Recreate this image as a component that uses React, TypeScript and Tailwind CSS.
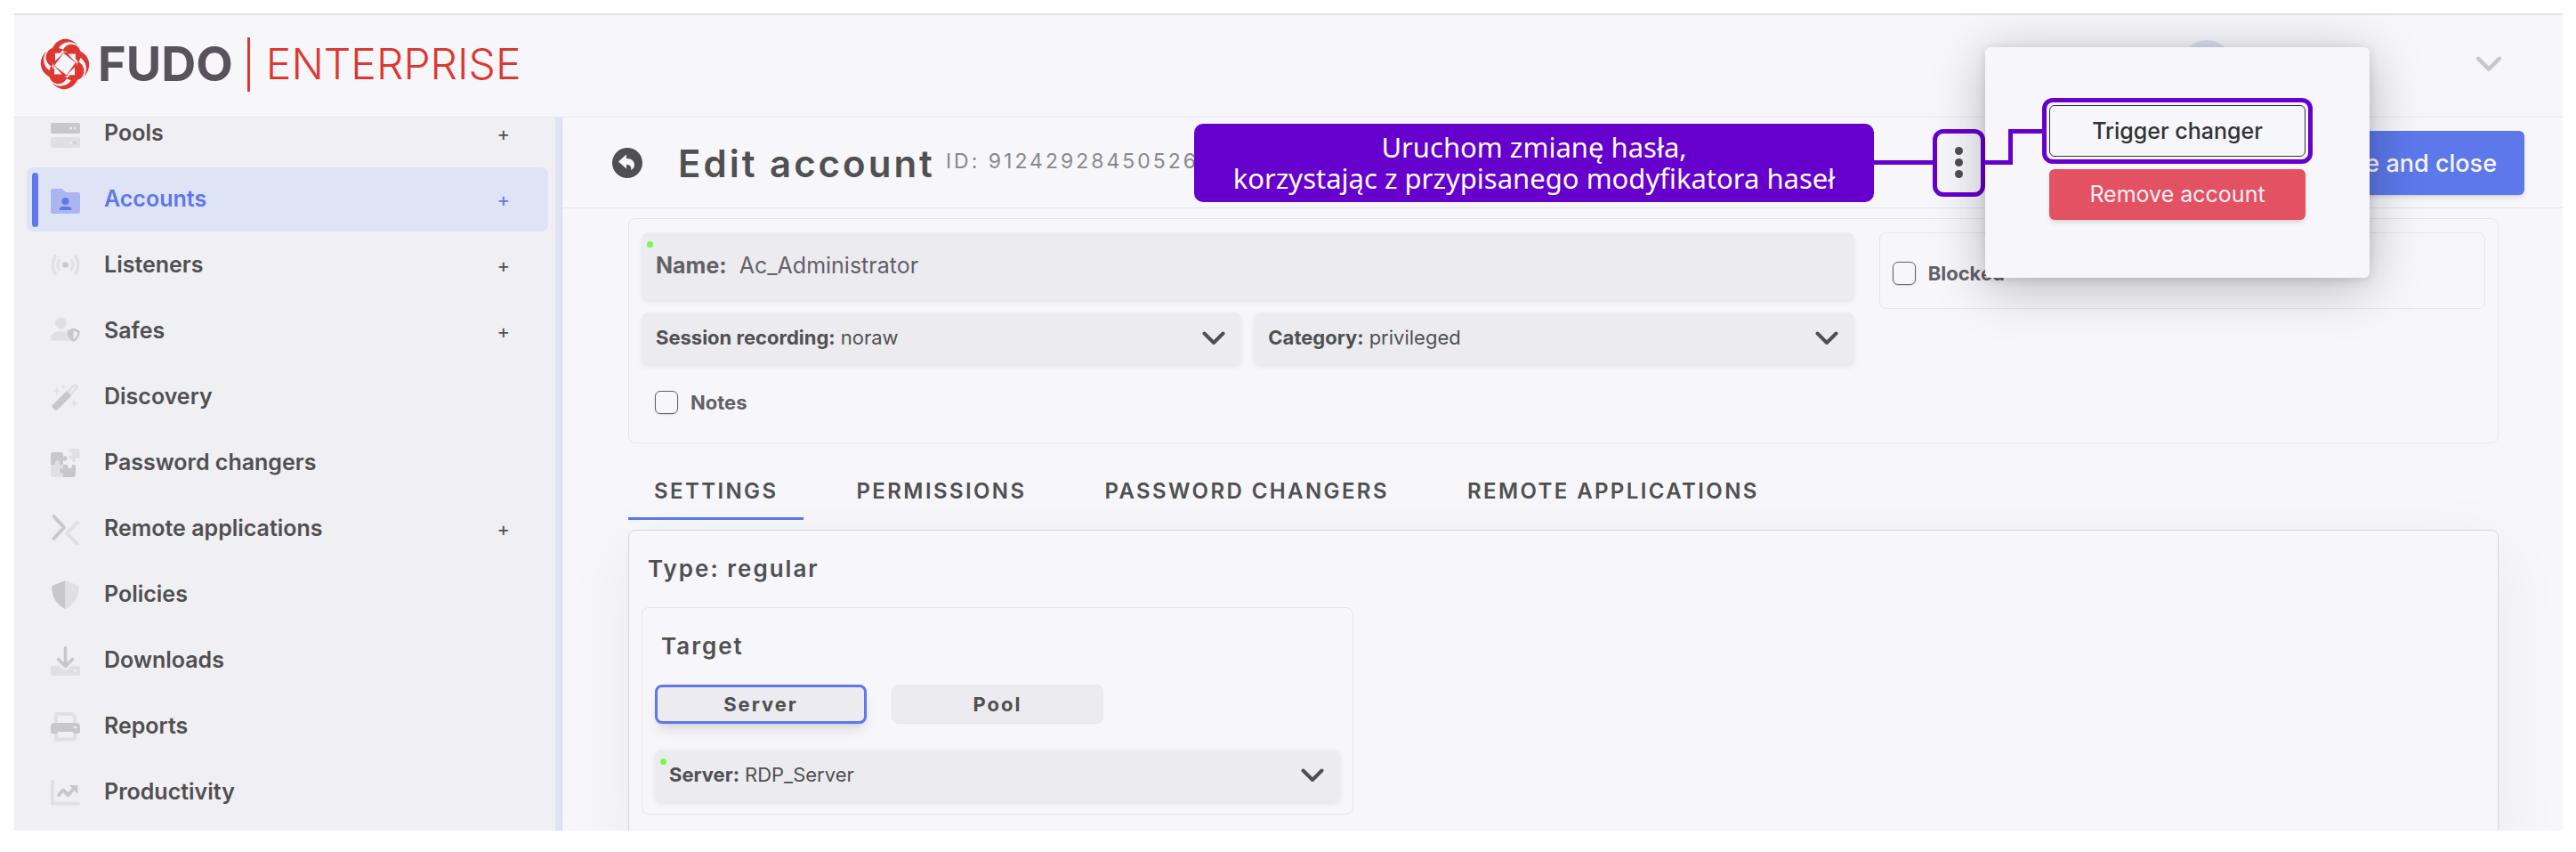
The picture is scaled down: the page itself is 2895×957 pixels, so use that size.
import React, { useState } from 'react';

const LIGHT = '#e0e0e2';
const DARK = '#c8c8ca';

const IconBox: React.FC<{ children: React.ReactNode }> = ({ children }) => (
    <svg viewBox="0 0 34 36" className="w-[34px] h-9 shrink-0" fill="none" aria-hidden="true">
        {children}
    </svg>
);

const PoolsIcon = () => (
    <IconBox>
        <rect x="0" y="6" width="33" height="12" rx="2" fill={DARK} />
        <rect x="0" y="22" width="33" height="12" rx="2" fill={LIGHT} />
        <circle cx="22.500" cy="12" r="1.500" fill="#f0eff4" />
        <circle cx="27" cy="12" r="1.500" fill="#e4e4e6" />
        <circle cx="22.500" cy="28" r="1.500" fill="#f0eff4" />
        <circle cx="27" cy="28" r="1.500" fill={DARK} />
    </IconBox>
);

const AccountsIcon = () => (
    <IconBox>
        <path d="M2 6h11l4 4h14a2 2 0 0 1 2 2v20a2 2 0 0 1-2 2H2a2 2 0 0 1-2-2V8a2 2 0 0 1 2-2z" fill="#abb6f0" />
        <circle cx="16.500" cy="20" r="4" fill="#5c78eb" />
        <path d="M9.500 30c0-3 2-4 4-4h6c2 0 4 1 4 4z" fill="#5c78eb" />
    </IconBox>
);

const ListenersIcon = () => (
    <IconBox>
        <circle cx="16.500" cy="17.500" r="3.300" fill={DARK} />
        <path d="M5 8a18 18 0 0 0 0 19M28 8a18 18 0 0 1 0 19" stroke={LIGHT} strokeWidth="3.600" strokeLinecap="round" />
        <path d="M9.500 12.500a9 9 0 0 0 0 10M23.500 12.500a9 9 0 0 1 0 10" stroke={LIGHT} strokeWidth="3.200" strokeLinecap="round" />
    </IconBox>
);

const SafesIcon = () => (
    <IconBox>
        <circle cx="11.500" cy="9" r="6.500" fill={LIGHT} />
        <path d="M0 28.500C0 21 4 18.500 8 18.500h7c1.500 0 1.800 0 2.500.3 0 4 1.500 7.500 4.500 9.700z" fill={LIGHT} />
        <path d="M25.500 14.500l7 2.700c.6 6-2 10.500-7 12.800-5-2.300-7.600-6.800-7-12.800z" fill={DARK} />
        <path d="M25.500 17.500l4.500 1.700c0 3.700-1.500 6.300-4.500 8z" fill="#f0eff4" />
    </IconBox>
);

const DiscoveryIcon = () => (
    <IconBox>
        <path d="M18.500 10.500L25 4a3.600 3.600 0 0 1 5 5l-6.500 6.500z" fill={LIGHT} />
        <path d="M21.500 11.500L27 6.500l1 1-5 5.500z" fill="#f0eff4" />
        <path d="M18 11l5.500 5.500L8 32a3 3 0 0 1-4 0l-1.500-1.500a3 3 0 0 1 0-4z" fill={DARK} />
        <path d="M6.500 6.500l1.300 3.200L11 11l-3.200 1.300-1.300 3.200-1.300-3.200L2 11l3.200-1.300z" fill={LIGHT} />
        <path d="M14.500 3l.9 2.100 2.100.9-2.100.9-.9 2.100-.9-2.100-2.100-.9 2.100-.9z" fill={LIGHT} />
        <path d="M26.500 20.500l1.300 3.200L31 25l-3.200 1.300-1.300 3.200-1.300-3.200L22 25l3.200-1.300z" fill={LIGHT} />
    </IconBox>
);

const PuzzleIcon = () => (
    <IconBox>
        <path d="M3 6h9a2 2 0 0 1 2 2v3c2-1.500 4.500-.3 4.500 2S16 16.500 14 15v5H9.500c1-2.500 0-4.500-2-4.500S4.500 17.500 5.500 20H0V9a3 3 0 0 1 3-3z" fill={DARK} />
        <path d="M0 20h5.500c-1-2.500 0-4.500 2-4.500s3 2 2 4.500H14v5c-2-1.500-4.500-.3-4.500 2S12 30.500 14 29v5H3a3 3 0 0 1-3-3z" fill={LIGHT} />
        <path d="M14 20h5.500c-1 2.500 0 4 2 4s3-1.500 2-4H26a2 2 0 0 1 2 2v9a3 3 0 0 1-3 3H14v-5c-2 1.500-4 .3-4-2s2-3.500 4-2z" fill={DARK} />
        <path d="M22 2h7a3.500 3.500 0 0 1 3.500 3.500V13h-5c1 2.500 0 4-1.500 4s-2.500-1.500-1.500-4H22a2 2 0 0 1-2-2v-1c2 .8 4-.3 4-2.300S22 4.700 20 5.500V4a2 2 0 0 1 2-2z" fill={LIGHT} />
    </IconBox>
);

const RemoteIcon = () => (
    <IconBox>
        <path d="M3.500 4L15 16.500 3.500 29" stroke={DARK} strokeWidth="4" strokeLinecap="round" strokeLinejoin="round" />
        <path d="M30 11L18 23l12 12" stroke={LIGHT} strokeWidth="4" strokeLinecap="round" strokeLinejoin="round" />
    </IconBox>
);

const PoliciesIcon = () => (
    <IconBox>
        <path d="M16.500 2v32C6.500 29.500 1 20 1.300 9.500c0-1 .5-1.600 1.400-2z" fill={DARK} />
        <path d="M16.500 2l13.800 5.500c.9.400 1.400 1 1.400 2C32 20 26.500 29.500 16.500 34z" fill={LIGHT} />
    </IconBox>
);

const DownloadsIcon = () => (
    <IconBox>
        <path d="M2 24h8l3.500 3.300a4.500 4.500 0 0 0 6 0L23 24h8a2 2 0 0 1 2 2v7a2 2 0 0 1-2 2H2a2 2 0 0 1-2-2v-7a2 2 0 0 1 2-2z" fill={LIGHT} />
        <circle cx="27.500" cy="29" r="1.500" fill="#f0eff4" />
        <path d="M16.500 3.500V24M8.500 16.500l8 8 8-8" stroke={DARK} strokeWidth="3.600" strokeLinecap="round" strokeLinejoin="round" />
    </IconBox>
);

const ReportsIcon = () => (
    <IconBox>
        <path d="M6 15V4h17.500L27 7.500V15M6 24v8.500h21V24" stroke={LIGHT} strokeWidth="4" strokeLinejoin="round" />
        <path d="M4 14h25a4 4 0 0 1 4 4v6a2 2 0 0 1-2 2h-5.500v-2h-18v2H2a2 2 0 0 1-2-2v-6a4 4 0 0 1 4-4z" fill={DARK} />
        <circle cx="27.500" cy="19" r="1.500" fill="#f0eff4" />
    </IconBox>
);

const ProductivityIcon = () => (
    <IconBox>
        <path d="M2 6v24.500h29" stroke={LIGHT} strokeWidth="4" strokeLinecap="round" strokeLinejoin="round" />
        <path d="M9 21l5-5.500 5.500 5.500 7-7.500" stroke={DARK} strokeWidth="4" strokeLinecap="round" strokeLinejoin="round" />
        <path d="M21 10h9.500v10z" fill={DARK} />
    </IconBox>
);

const Chevron: React.FC<{ className?: string }> = ({ className = 'w-[26px] h-4' }) => (
    <svg viewBox="0 0 26 16" className={`shrink-0 pointer-events-none ${className}`} fill="none" aria-hidden="true">
        <path d="M2.500 2.500L13 13 23.500 2.500" stroke="currentColor" strokeWidth="4" strokeLinecap="round" strokeLinejoin="round" />
    </svg>
);

const LogoMark = () => (
    <svg viewBox="0 0 68 68" className="w-[58px] h-[60px]" preserveAspectRatio="none" aria-hidden="true">
        <path d="M45 17L52 45 23 52 16 23z" fill="#dc3831" />
        {[0, 90, 180, 270].map(angle => (
            <g key={angle} transform={`rotate(${angle} 34 34)`} fill="#dc3831">
                <path d="M15 24C16 4 36-6 51 10 40 2 27 7 24 18z" />
                <path d="M31 17C34 9 44 6 51 12c5 5 5 13 1 20L43 21z" />
            </g>
        ))}
        {[0, 90, 180, 270].map(angle => (
            <path key={angle} d="M38 21h10v11z" fill="#f7f6fb" transform={`rotate(${angle} 34 34)`} />
        ))}
        <path d="M33 18.500L49.500 33 35 49.500 18.500 35z" fill="#dc3831" />
        <path d="M32 20L48 32 36 48 20 36z" fill="#f7f6fb" />
    </svg>
);

const menu = [
    { name: 'Pools', icon: <PoolsIcon />, add: true },
    { name: 'Accounts', icon: <AccountsIcon />, add: true },
    { name: 'Listeners', icon: <ListenersIcon />, add: true },
    { name: 'Safes', icon: <SafesIcon />, add: true },
    { name: 'Discovery', icon: <DiscoveryIcon /> },
    { name: 'Password changers', icon: <PuzzleIcon /> },
    { name: 'Remote applications', icon: <RemoteIcon />, add: true },
    { name: 'Policies', icon: <PoliciesIcon /> },
    { name: 'Downloads', icon: <DownloadsIcon /> },
    { name: 'Reports', icon: <ReportsIcon /> },
    { name: 'Productivity', icon: <ProductivityIcon /> },
];

const tabs = ['Settings', 'Permissions', 'Password changers', 'Remote applications'];

const Header = () => (
    <header className="flex items-center h-[117px] shrink-0 pl-7 pr-[68px] border-t-2 border-t-[#e1e3e0] border-b border-b-[#e5e5ea]">
        <a href="#" className="flex items-center pb-1 leading-[60px]">
            <LogoMark />
            <span className="ml-2 text-[54px] font-bold text-[#57525c]">FUDO</span>
            <span className="w-[3px] h-[61px] ml-4 mr-[18px] bg-[#dc3831]" />
            <span className="text-5xl leading-[60px] font-light text-[#dc3831]">ENTERPRISE</span>
        </a>
        <span className="w-[58px] h-[58px] ml-auto mr-[273px] rounded-full bg-[#dcdff3]" />
        <button aria-label="User menu" className="pb-1 text-[#c8c8c8]">
            <Chevron className="w-[30px] h-[18px]" />
        </button>
    </header>
);

const Sidebar = () => (
    <nav className="w-[616px] shrink-0 overflow-hidden bg-[#f0eff4] border-r border-r-[#d3daf1] flex">
        <ul className="flex-1 flex flex-col gap-[2px] -mt-[18px] pl-[14px] pr-2">
            {menu.map(item => {
                const active = item.name === 'Accounts';
                return (
                    <li
                        key={item.name}
                        className={`flex items-center h-[72px] shrink-0 pl-[6px] pr-[43px] rounded-lg ${active ? 'bg-[#dfe3f6] text-[#5c78eb]' : 'text-[#505050]'}`}
                    >
                        <span className={`w-[7px] h-[61px] rounded-full ${active ? 'bg-[#5c78eb]' : ''}`} />
                        <a href="#" className="flex-1 flex items-center gap-[26px] ml-[14px] text-[25px] font-semibold">
                            {item.icon}
                            {item.name}
                        </a>
                        {item.add && <button aria-label={`Add to ${item.name}`} className="text-[22px] leading-6">+</button>}
                    </li>
                );
            })}
        </ul>
        <div className="w-[7px] bg-[#dfe3f4]" />
    </nav>
);

const ActionsPopup = () => (
    <div className="absolute left-0 -top-[94px] z-20 w-[432px] h-[259px] pt-[57px] flex flex-col items-center gap-[6px] rounded-md bg-[#f7f6fb] shadow-[0_10px_60px_rgba(0,0,0,0.26),0_2px_12px_rgba(0,0,0,0.12)]">
        <svg viewBox="0 0 68 44" className="absolute left-0 top-[90px] w-[68px] h-11" fill="none" aria-hidden="true">
            <path d="M0 39.500H28.500V4.500H68" stroke="#6600cc" strokeWidth="5" />
        </svg>
        <div className="relative w-[304px] h-[74px] p-[3px] border-[5px] border-[#6600cc] rounded-xl bg-[#f7f6fb]">
            <button className="w-full h-full text-[25px] leading-[30px] font-medium text-[#333333] border border-[#333333] rounded-md">Trigger changer</button>
        </div>
        <button className="w-[288px] h-[57px] text-[25px] leading-[30px] text-[#faf0f3] bg-[#e35263] rounded-md shadow-md">Remove account</button>
    </div>
);

const Toolbar = () => (
    <div className="flex items-center h-[102px] shrink-0 pl-14 pr-[43px] border-b border-b-[#e5e5ea]">
        <button aria-label="Back" className="w-[34px] h-[34px]">
            <svg viewBox="0 0 34 34" aria-hidden="true">
                <circle cx="17" cy="17" r="17" fill="#505050" />
                <path d="M7 15.500l9-8v4.500c6 0 9 3.500 9 7 0 3-1.500 5-4 6 1-3.500-.5-6-5-6v4.500z" fill="#f7f6fb" />
            </svg>
        </button>
        <h1 className="ml-[40px] pt-[2px] text-[42px] leading-[50px] font-semibold tracking-[3px] text-[#505050] whitespace-nowrap">Edit account</h1>
        <p className="ml-3 pb-[2px] text-[23px] tracking-[3px] text-[#888888] whitespace-nowrap">ID: 91242928450526</p>
        <div className="relative z-20 ml-auto flex items-center">
            <p className="absolute right-full mr-[66px] w-[764px] h-[88px] flex items-center justify-center rounded-[10px] bg-[#6600cc] font-['Noto_Sans',sans-serif] text-[31px] leading-[35px] text-white text-center">
                Uruchom zmianę hasła,
                <br />
                korzystając z przypisanego modyfikatora haseł
            </p>
            <span className="absolute right-full w-[66px] h-[5px] bg-[#6600cc]" />
            <button aria-label="More actions" className="w-[59px] h-[76px] flex flex-col items-center justify-center gap-1 border-[5px] border-[#6600cc] rounded-xl">
                <span className="w-[9px] h-[9px] rounded-full bg-[#505050]" />
                <span className="w-[9px] h-[9px] rounded-full bg-[#505050]" />
                <span className="w-[9px] h-[9px] rounded-full bg-[#505050]" />
            </button>
            <div className="relative flex justify-end w-[606px]">
                <button className="h-[72px] px-[31px] pt-1 text-[27px] font-medium text-[#f7f6fb] bg-[#5c78eb] rounded-md shadow-md">Save and close</button>
                <ActionsPopup />
            </div>
        </div>
    </div>
);

const RequiredDot = () => <span className="absolute left-[6px] top-[10px] w-[7px] h-[7px] rounded-full bg-[#76f94b]" />;

interface SelectFieldProps {
    id: string;
    label: string;
    value: string;
    required?: boolean;
}

const SelectField: React.FC<SelectFieldProps> = ({ id, label, value, required }) => (
    <div className="relative flex-1 flex items-center gap-[6px] h-[58px] pl-4 pr-[18px] rounded-lg bg-[#ecebf0] text-[22px] text-[#505050] shadow-[0_3px_6px_rgba(0,0,0,0.08)]">
        {required && <RequiredDot />}
        <label htmlFor={id} className="pb-[2px] font-bold">{label}:</label>
        <select id={id} defaultValue={value} className="flex-1 pb-[2px] appearance-none bg-transparent">
            <option>{value}</option>
        </select>
        <Chevron />
    </div>
);

const Checkbox: React.FC<{ label: string }> = ({ label }) => (
    <label className="flex items-center gap-[14px] text-[22px] leading-[26px] font-bold text-[#636168]">
        <input type="checkbox" className="w-[26px] h-[26px] appearance-none border border-[#636168] rounded-md shadow-sm" />
        {label}
    </label>
);

const AccountCard = () => {
    const [name, setName] = useState('Ac_Administrator');

    return (
        <section className="grid grid-cols-[2fr_1fr] items-start gap-7 px-[14px] pt-[15px] pb-8 border border-[#e5e5ea] rounded-lg">
            <div className="flex flex-col gap-[15px]">
                <div className="relative flex items-center h-[75px] gap-[14px] pl-4 rounded-lg bg-[#ecebf0] text-[25px] text-[#636168] shadow-[0_3px_6px_rgba(0,0,0,0.08)]">
                    <RequiredDot />
                    <label htmlFor="name" className="font-bold">Name:</label>
                    <input id="name" value={name} onChange={e => setName(e.target.value)} className="flex-1 bg-transparent outline-none" />
                </div>
                <div className="flex gap-[14px]">
                    <SelectField id="recording" label="Session recording" value="noraw" />
                    <SelectField id="category" label="Category" value="privileged" />
                </div>
                <div className="pl-[15px] pt-[15px]">
                    <Checkbox label="Notes" />
                </div>
            </div>
            <div className="flex items-center h-[86px] px-[14px] pt-[6px] border border-[#e5e5ea] rounded-lg">
                <Checkbox label="Blocked" />
            </div>
        </section>
    );
};

const SettingsPanel = () => {
    const [target, setTarget] = useState('Server');

    return (
        <section className="flex-1 px-[14px] pb-8 border border-[#d5d5da] rounded-lg bg-[#f7f6fb] shadow-[0_20px_80px_rgba(0,0,0,0.06)]">
            <h2 className="px-[7px] text-[26px] leading-[86px] font-semibold tracking-[2px] text-[#505050]">Type: regular</h2>
            <div className="w-[800px] max-w-full px-[14px] pb-[14px] border border-[#e5e5ea] rounded-lg">
                <h3 className="px-[7px] text-[26px] leading-[86px] font-semibold tracking-[2px] text-[#505050]">Target</h3>
                <div className="flex gap-7 mb-[29px]">
                    {['Server', 'Pool'].map(option => (
                        <button
                            key={option}
                            onClick={() => setTarget(option)}
                            className={`w-[238px] h-11 text-[22px] leading-[26px] font-bold tracking-[2px] text-[#505050] bg-[#ecebf0] rounded-lg ${target === option ? 'border-[3px] border-[#5c78eb] shadow-lg' : 'border border-[#e5e5ea]'}`}
                        >
                            {option}
                        </button>
                    ))}
                </div>
                <SelectField id="server" label="Server" value="RDP_Server" required />
            </div>
        </section>
    );
};

const App: React.FC = () => {
    const [tab, setTab] = useState('Settings');

    return (
        <div className="h-screen pt-[15px] pl-4 pr-[15px] pb-6 bg-white font-[Inter,sans-serif]">
            <div className="h-full flex flex-col overflow-hidden bg-[#f7f6fb]">
                <Header />
                <div className="flex-1 flex min-h-0">
                    <Sidebar />
                    <main className="flex-1 flex flex-col min-w-0">
                        <Toolbar />
                        <div className="flex-1 flex flex-col pt-[11px] pl-[74px] pr-[72px]">
                            <AccountCard />
                            <div role="tablist" className="flex gap-[30px] mb-[11px]">
                                {tabs.map(name => (
                                    <button
                                        key={name}
                                        role="tab"
                                        aria-selected={tab === name}
                                        onClick={() => setTab(name)}
                                        className={`h-[86px] px-[29px] pt-6 text-2xl font-semibold tracking-widest uppercase text-[#505050] border-b-[3px] ${tab === name ? 'border-[#5c78eb]' : 'border-transparent'}`}
                                    >
                                        {name}
                                    </button>
                                ))}
                            </div>
                            <SettingsPanel />
                        </div>
                    </main>
                </div>
            </div>
        </div>
    );
};

export default App;
